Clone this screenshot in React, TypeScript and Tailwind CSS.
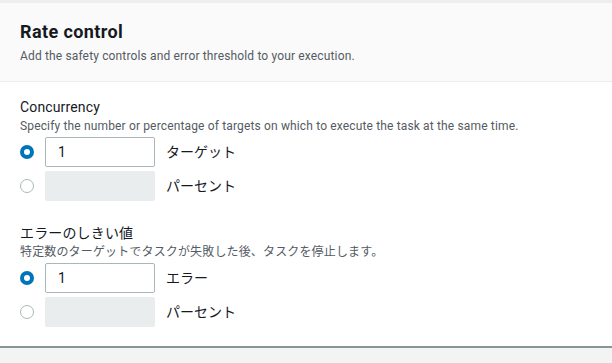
import React from "react";

const FONT = { fontFamily: "Roboto, 'Noto Sans CJK JP', sans-serif" };

function Radio({ checked }: { checked?: boolean }) {
  return checked ? (
    <span className="h-[14px] w-[14px] shrink-0 rounded-full border-[4px] border-[#0073bb] bg-white" />
  ) : (
    <span className="h-[14px] w-[14px] shrink-0 rounded-full border border-[#aab7b8] bg-white" />
  );
}

function OptionRow({ checked, value, unit }: { checked?: boolean; value?: string; unit: string }) {
  return (
    <div className="flex items-center">
      <Radio checked={checked} />
      <div
        className={
          checked
            ? "ml-[11px] flex h-[30px] w-[110px] items-center rounded-[2px] border border-[#aab7b8] bg-white px-3 text-sm text-[#16191f]"
            : "ml-[11px] h-[30px] w-[110px] rounded-[2px] border border-[#eaeded] bg-[#eaeded]"
        }
      >
        {value}
      </div>
      <span className="ml-[11px] text-sm text-[#16191f]">{unit}</span>
    </div>
  );
}

function Field({
  label,
  desc,
  rows,
}: {
  label: string;
  desc: string;
  rows: { checked?: boolean; value?: string; unit: string }[];
}) {
  return (
    <div>
      <div className="text-sm leading-5 tracking-[0.15px] text-[#16191f]">{label}</div>
      <div className="mt-[1px] text-xs leading-4 tracking-[0.15px] text-[#545b64]">{desc}</div>
      <div className="mt-[3px] flex flex-col gap-1">
        {rows.map((r) => (
          <OptionRow key={r.unit} {...r} />
        ))}
      </div>
    </div>
  );
}

export default function App() {
  return (
    <div className="h-[363px] w-[612px] overflow-hidden bg-[#f2f3f3]" style={FONT}>
      <div className="h-[3px] bg-[#eeeeee]" />
      <div className="border-b border-[#eaeded] bg-[#fafafa] px-5 pb-[17px] pt-[18px]">
        <h2 className="text-lg font-bold leading-[22px] tracking-[0.4px] text-[#16191f]">Rate control</h2>
        <p className="mt-[5px] text-xs leading-4 tracking-[0.15px] text-[#545b64]">
          Add the safety controls and error threshold to your execution.
        </p>
      </div>
      <div className="flex flex-col gap-[22px] border-b-2 border-[#879596] bg-white px-5 pb-[19px] pt-[15px]">
        <Field
          label="Concurrency"
          desc="Specify the number or percentage of targets on which to execute the task at the same time."
          rows={[
            { checked: true, value: "1", unit: "ターゲット" },
            { unit: "パーセント" },
          ]}
        />
        <Field
          label="エラーのしきい値"
          desc="特定数のターゲットでタスクが失敗した後、タスクを停止します。"
          rows={[
            { checked: true, value: "1", unit: "エラー" },
            { unit: "パーセント" },
          ]}
        />
      </div>
    </div>
  );
}
